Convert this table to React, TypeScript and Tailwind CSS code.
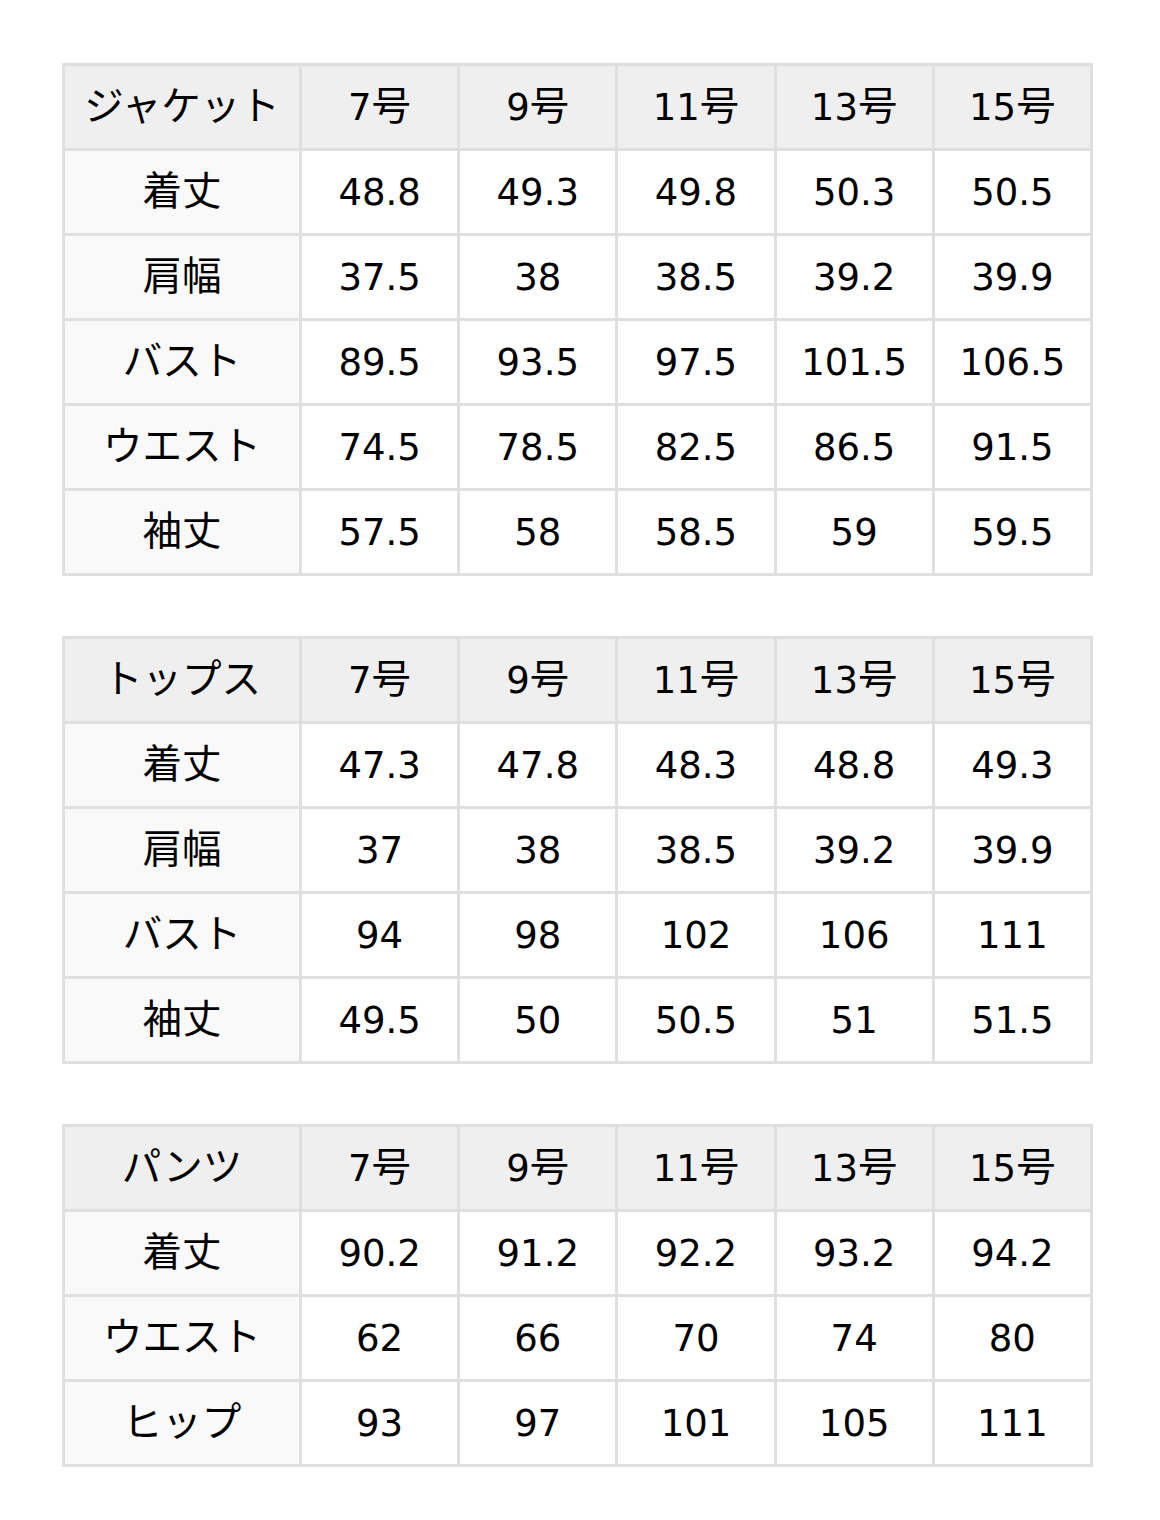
import React from 'react';

const sizes = ['7', '9', '11', '13', '15'];

const tables = [
  {
    title: 'ジャケット',
    rows: [
      ['着丈', '48.8', '49.3', '49.8', '50.3', '50.5'],
      ['肩幅', '37.5', '38', '38.5', '39.2', '39.9'],
      ['バスト', '89.5', '93.5', '97.5', '101.5', '106.5'],
      ['ウエスト', '74.5', '78.5', '82.5', '86.5', '91.5'],
      ['袖丈', '57.5', '58', '58.5', '59', '59.5'],
    ],
  },
  {
    title: 'トップス',
    rows: [
      ['着丈', '47.3', '47.8', '48.3', '48.8', '49.3'],
      ['肩幅', '37', '38', '38.5', '39.2', '39.9'],
      ['バスト', '94', '98', '102', '106', '111'],
      ['袖丈', '49.5', '50', '50.5', '51', '51.5'],
    ],
  },
  {
    title: 'パンツ',
    rows: [
      ['着丈', '90.2', '91.2', '92.2', '93.2', '94.2'],
      ['ウエスト', '62', '66', '70', '74', '80'],
      ['ヒップ', '93', '97', '101', '105', '111'],
    ],
  },
];

const cell = 'border-[3px] border-[#dfdfdf] h-[85px] p-0 text-center align-middle font-normal';
const jp = 'text-[39.5px]';

const SizeTable = ({ title, rows }: { title: string; rows: string[][] }) => (
  <table className="table-fixed border-collapse w-[1031px]">
    <colgroup>
      <col className="w-[237px]" />
      {sizes.map(s => (
        <col key={s} />
      ))}
    </colgroup>
    <thead>
      <tr className="bg-[#efefef]">
        <th className={cell}>
          <span className={jp}>{title}</span>
        </th>
        {sizes.map(s => (
          <th key={s} className={cell}>
            {s}
            <span className={jp}>号</span>
          </th>
        ))}
      </tr>
    </thead>
    <tbody>
      {rows.map(r => (
        <tr key={r[0]}>
          <td className={`${cell} bg-[#f9f9f9]`}>
            <span className={jp}>{r[0]}</span>
          </td>
          {r.slice(1).map((v, i) => (
            <td key={i} className={`${cell} bg-white`}>{v}</td>
          ))}
        </tr>
      ))}
    </tbody>
  </table>
);

export default function App() {
  return (
    <div
      className="bg-white min-h-[1520px] pt-[63px] pl-[62px] text-[37px] leading-none text-black"
      style={{ fontFamily: '"DejaVu Sans", "Noto Sans CJK JP", sans-serif' }}
    >
      <div className="flex flex-col gap-[60px]">
        {tables.map(t => (
          <SizeTable key={t.title} title={t.title} rows={t.rows} />
        ))}
      </div>
    </div>
  );
}
